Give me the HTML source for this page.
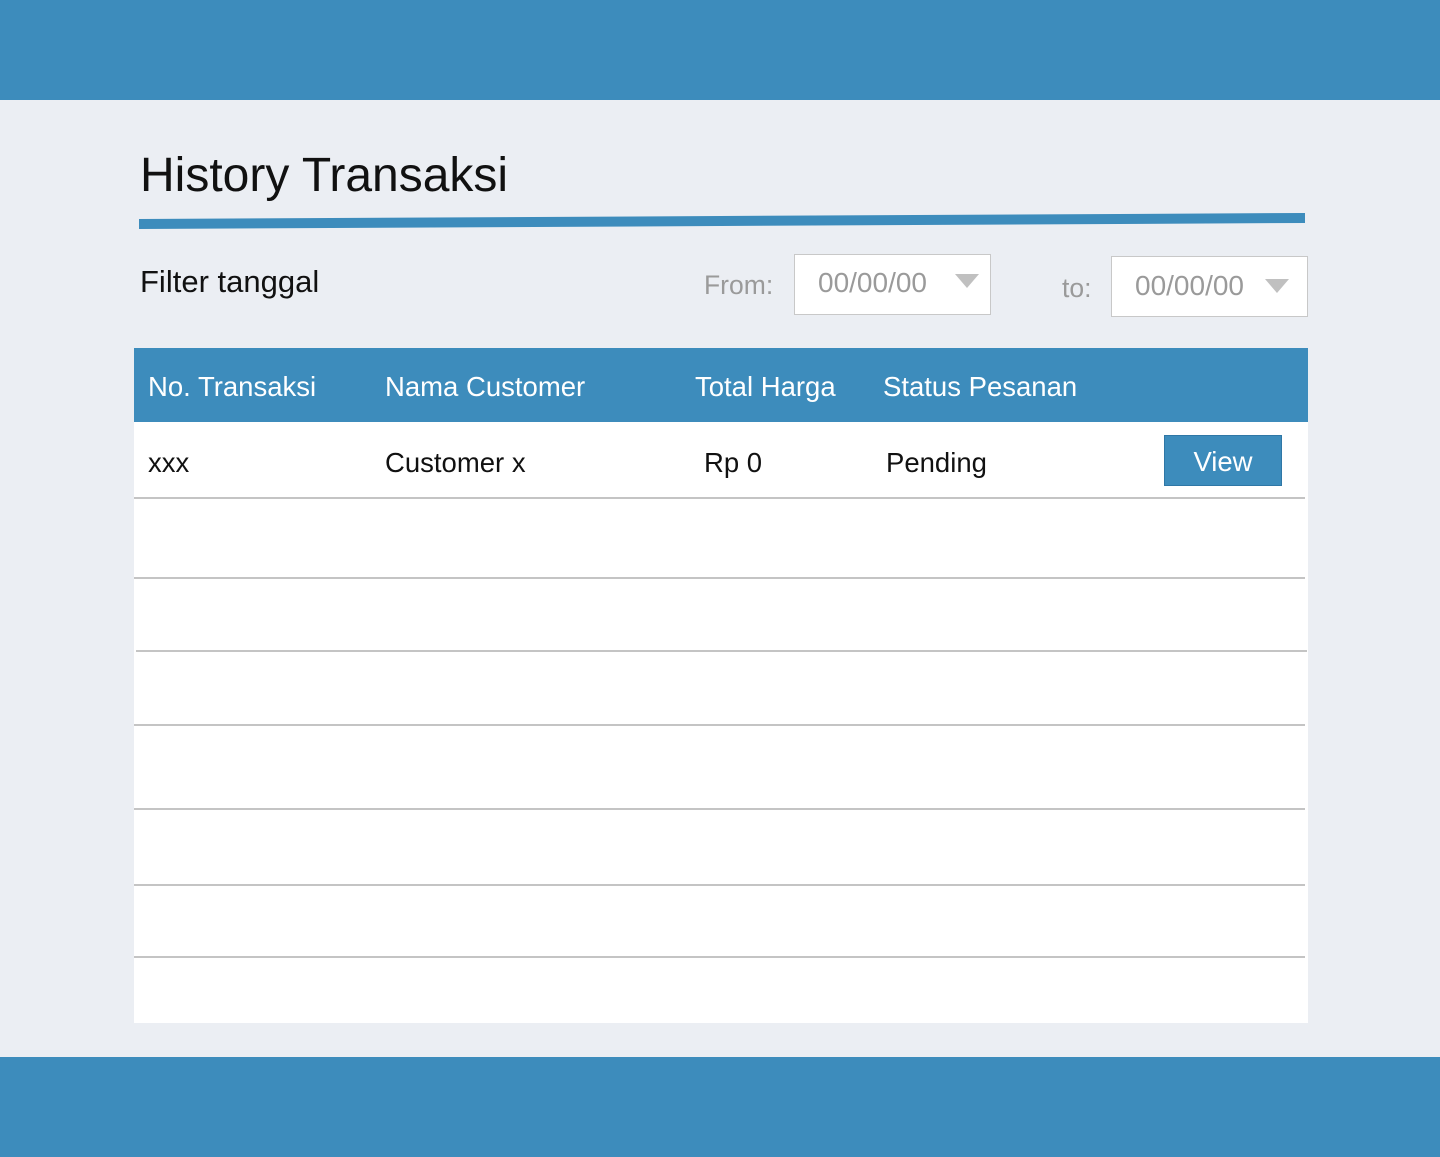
<!DOCTYPE html>
<html><head><meta charset="utf-8"><style>
*{margin:0;padding:0;box-sizing:border-box}
body{width:1440px;height:1157px;background:#ebeef3;position:relative;overflow:hidden;font-family:"Liberation Sans",sans-serif}
.a{position:absolute;line-height:1;white-space:nowrap}
.bar{position:absolute;left:0;width:1440px;height:100px;background:#3d8cbc}
.box{position:absolute;background:#fff;border:1px solid #c8c8c8}
.tri{position:absolute;width:0;height:0;border-left:12px solid transparent;border-right:12px solid transparent;border-top:14px solid #c0c0c0}
.ln{position:absolute;left:134px;width:1171px;height:2px;background:#c4c4c4}
.h{color:#fff;font-size:27.5px}
.r{color:#111;font-size:27.5px}
</style></head><body>
<div class="bar" style="top:0"></div>
<div class="bar" style="top:1057px"></div>
<div class="a" style="left:140px;top:152px;font-size:48px;color:#111">History Transaksi</div>
<svg class="a" style="left:0;top:0" width="1440" height="240"><polygon points="139,219 1305,213 1305,223 139,229" fill="#3d8cbc"/></svg>
<div class="a" style="left:140px;top:266px;font-size:31px;color:#111">Filter tanggal</div>
<div class="a" style="left:704px;top:272px;font-size:26.5px;color:#9a9a9a">From:</div>
<div class="box" style="left:794px;top:254px;width:197px;height:61px"></div>
<div class="a" style="left:818px;top:269px;font-size:28px;color:#9a9a9a">00/00/00</div>
<div class="tri" style="left:955px;top:274px"></div>
<div class="a" style="left:1062px;top:275px;font-size:26.5px;color:#9a9a9a">to:</div>
<div class="box" style="left:1111px;top:256px;width:197px;height:61px"></div>
<div class="a" style="left:1135px;top:272px;font-size:28px;color:#9a9a9a">00/00/00</div>
<div class="tri" style="left:1265px;top:279px"></div>
<div style="position:absolute;left:134px;top:348px;width:1174px;height:675px;background:#fff"></div>
<div style="position:absolute;left:134px;top:348px;width:1174px;height:74px;background:#3d8cbc"></div>
<div class="a h" style="left:148px;top:373px">No. Transaksi</div>
<div class="a h" style="left:385px;top:373px">Nama Customer</div>
<div class="a h" style="left:695px;top:373px">Total Harga</div>
<div class="a h" style="left:883px;top:373px">Status Pesanan</div>
<div class="a r" style="left:148px;top:449px">xxx</div>
<div class="a r" style="left:385px;top:449px">Customer x</div>
<div class="a r" style="left:704px;top:449px">Rp 0</div>
<div class="a r" style="left:886px;top:449px">Pending</div>
<div style="position:absolute;left:1164px;top:435px;width:118px;height:51px;background:#3d8cbc;border:1px solid #2f77a6;color:#fff;font-size:27.5px;line-height:51px;text-align:center">View</div>
<div class="ln" style="top:497px"></div>
<div class="ln" style="top:577px"></div>
<div class="ln" style="top:650px;left:136px;width:1171px"></div>
<div class="ln" style="top:724px"></div>
<div class="ln" style="top:808px"></div>
<div class="ln" style="top:884px"></div>
<div class="ln" style="top:956px"></div>
</body></html>
